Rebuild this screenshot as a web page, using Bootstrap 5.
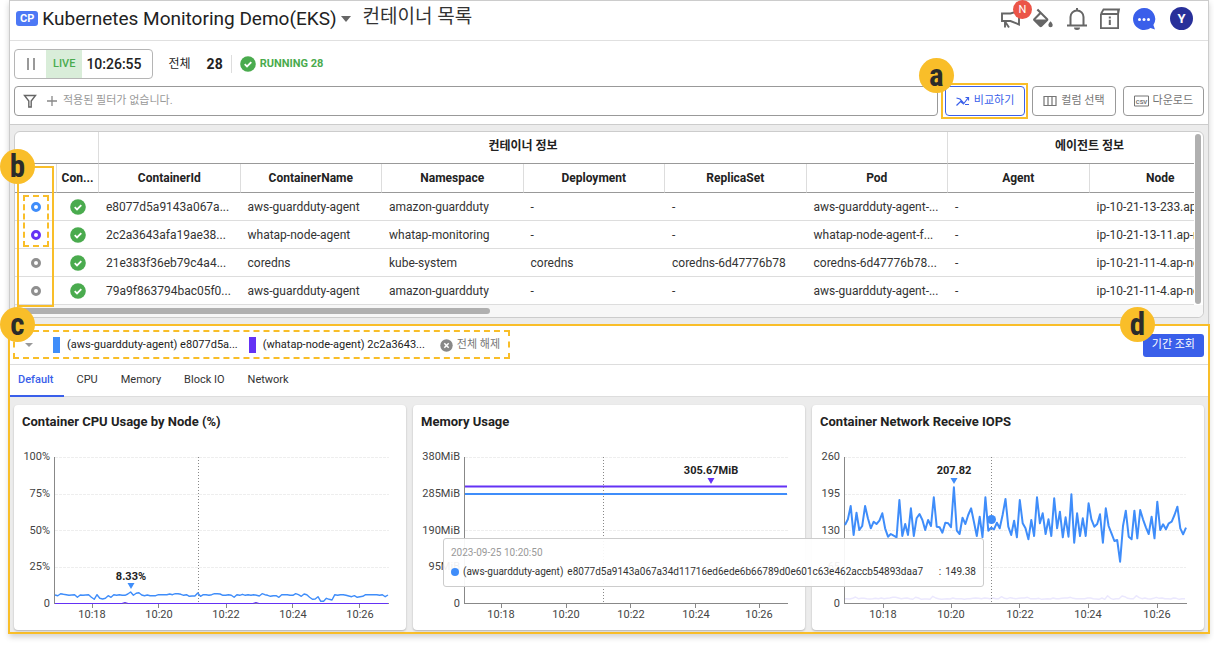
<!DOCTYPE html>
<html lang="ko">
<head>
<meta charset="utf-8">
<meta name="viewport" content="width=device-width, initial-scale=1">
<title>Kubernetes Monitoring Demo(EKS) - 컨테이너 목록</title>
<link href="https://cdn.jsdelivr.net/npm/bootstrap@5.3.0/dist/css/bootstrap.min.css" rel="stylesheet">
<style>
:root{--ink:#333;--muted:#757575;--line:#ddd;--brand:#3a5fea;--mark:#f9be29;--s1:#3f8dfa;--s2:#6432f5;--ok:#4aab4e}
body{font-family:Roboto,"Noto Sans CJK KR",sans-serif;font-size:12px;line-height:16px;color:#222;background:#fff;padding:0 5px 11px 9px}
.app{border:1px solid #ccc;border-bottom:0;box-shadow:0 3px 6px rgba(0,0,0,.18)}
.topbar{height:40px;border-bottom:1px solid #e0e0e0;padding:0 15px 4px 6px}
.cp{background:#4c78f5;color:#fff;font-size:11px;font-weight:700;line-height:15px;padding:0 4px;border-radius:3px}
.project,.pagename{font-size:19px;line-height:24px;color:var(--ink)}
.pagename{margin:0 0 4px 12px;font-weight:400}
.plain{background:none;border:0;padding:0;color:inherit}
.caret{width:0;height:0;border:5px solid transparent;border-top:6px solid #666;border-bottom:0}
.caret.sm{border-width:4px 4px 0;border-top-color:#999}
.icons{gap:10px}
.icons svg,.btn svg,.field svg{display:block}
.news{position:relative}
.newbadge{position:absolute;left:13px;top:-9px;width:19px;height:19px;border-radius:50%;background:#eb5548;color:#fff;font-size:11px;line-height:19px;text-align:center}
.avatar{width:23px;height:23px;border-radius:50%;background:#28309a;color:#fff;font-weight:700;font-size:13px;line-height:23px}
.tools{padding:8px 4px;border-bottom:1px solid #ccc}
.box30{height:30px;border:1px solid #999;border-radius:4px;background:#fff}
.live{border-color:#b5b5b5;overflow:hidden}
.live .tag{background:#d9edd9;color:var(--ok);padding:0 7px;line-height:28px;font-size:11px;font-weight:500}
.live time{font-size:14px;font-weight:500;padding:0 10px 0 4px;line-height:28px}
.pause{width:31px}
.pause i{width:2px;height:12px;background:#999}
.total{font-size:14px;font-weight:700}
.running{color:var(--ok);font-size:11px;font-weight:700}
.vr1{width:1px;height:18px;background:var(--line)}
.filters{gap:7px;margin-top:7px}
.field{padding:0 8px;gap:5px}
.field input{border:0;outline:0;background:none;font-size:11px;color:#333;min-width:0}
.field input::placeholder{color:#999;opacity:1}
.tool{font-size:11px;line-height:16px;padding:0 10px;color:#757575;gap:4px}
.tool.on{color:var(--brand);border-color:var(--brand)}
.hold{position:relative}
.pin{position:absolute;width:35px;height:35px;border-radius:50%;background:var(--mark);color:#2b2b2b;font:700 31px/35px "Roboto Condensed","Liberation Sans Narrow",Roboto,sans-serif;text-align:center;z-index:5}
.frame{position:absolute;border:2px solid var(--mark);pointer-events:none;z-index:4}
.frame.dash{border-style:dashed}
.stage{background:#ececec;padding:6px 4px}
.gridcard{background:#fff;border:1px solid #ccc;border-radius:6px}
.view{overflow:hidden;min-width:0;border-top-left-radius:6px}
.list{width:1216px;table-layout:fixed;border-collapse:separate;border-spacing:0;margin:0}
.list th,.list td{padding:0 0 0 7px;white-space:nowrap;overflow:hidden;vertical-align:middle;border:0;color:var(--ink)}
.list th{text-align:center;font-weight:700;border-bottom:1px solid #999;border-right:1px solid var(--line);color:#222;padding:0}
.list th:last-child{border-right:0}
.list tr.g th{height:32px;padding-bottom:4px}
.list tr.c th{height:29px}
.list td{height:28px;border-bottom:1px solid var(--line)}
.list td:first-child,.list td:nth-child(2){text-align:center;padding:0}
.list svg{display:block;margin:auto}
.pick{appearance:none;display:block;width:10px;height:10px;border:3px solid #8f8f8f;border-radius:50%;margin:0 auto;background:#fff}
.pick.p1{border-color:var(--s1)}.pick.p2{border-color:var(--s2)}
.vbar{width:9px;padding:2px 2px 1px 1px}
.hbar{height:12px;background:#f7f7f7;padding:3px 0;border-radius:0 0 6px 6px}
.thumb{background:#b0b0b0;border-radius:3px}
.hbar .thumb{width:40%;height:6px}
.panel{border:2px solid var(--mark);margin:0 -2px;background:#fff}
.legend{height:39px;border-bottom:1px solid var(--line);padding:0 4px 0 15px;font-size:11px}
.swatch{width:7px;height:16px}
.item{padding:0 11px 0 7px}
.clear{color:#777}
.query{background:var(--brand);color:#fff;font-size:11px;line-height:16px;height:23px;padding:0 8px;border-radius:3px}
.tabs{height:32px;border-bottom:1px solid var(--line);font-size:11px}
.tabs a{color:var(--ink);text-decoration:none;line-height:30px;padding:0 12px 0 11px;height:32px;border-bottom:2px solid transparent}
.tabs a.on{color:var(--brand);border-color:var(--brand);font-weight:500;padding:0 11px 0 8px;margin-right:1px}
.charts{display:grid;grid-template-columns:repeat(3,minmax(0,1fr));gap:7px;background:#ececec;padding:8px 4px 2px}
.chart{background:#fff;border-radius:4px;box-shadow:0 1px 2px rgba(0,0,0,.25)}
.chart h2{font-size:13px;line-height:16px;font-weight:700;margin:0;padding:9px 8px 10px;color:#222}
.chart svg{display:block;width:100%}
.chart text{font-size:11px;fill:#444}
.chart text.peak{font-weight:700;fill:#222;text-anchor:middle}
.x text{text-anchor:middle}.y text{text-anchor:end}
.grid{stroke:#eee;stroke-dasharray:3 1}
.axis{stroke:#888;fill:none}
.cursor{stroke:#888;stroke-dasharray:1 2}
.plot{fill:none;stroke-linejoin:round}
.tip{position:absolute;left:433px;top:141px;width:541px;height:49px;padding:6px 7px;border:1px solid #ccc;border-radius:3px;background:rgba(255,255,255,.92);font-size:10px;white-space:nowrap;z-index:3;color:var(--ink)}
.tip .when{line-height:16px;color:#999}
.tip .row2{gap:4px;line-height:22px}
.dot{width:8px;height:8px;border-radius:50%;background:var(--s1)}
</style>
</head>
<body>
<svg width="0" height="0" class="position-absolute" aria-hidden="true">
  <symbol id="ok" viewBox="0 0 16 16"><circle cx="8" cy="8" r="7.8" fill="#4aab4e"/><path d="M4.7 8.2 7 10.4l4.3-4.3" fill="none" stroke="#fff" stroke-width="1.8"/></symbol>
</svg>
<div class="app">
  <header class="topbar d-flex align-items-center justify-content-between">
    <div class="d-flex align-items-center">
      <span class="cp me-1">CP</span>
      <button class="plain project d-flex align-items-center" type="button">Kubernetes Monitoring Demo(EKS)<span class="caret ms-1"></span></button>
      <h1 class="pagename">컨테이너 목록</h1>
    </div>
    <div class="icons d-flex align-items-center">
      <button class="plain news" type="button" aria-label="News"><svg width="22" height="20" viewBox="0 0 22 20" fill="none" stroke="#666" stroke-width="1.9"><path d="M2 4.5h8.5L19 2v13.500L10.500 12H2zM5 12v6.500M5 12.500 9 18.500"/></svg><span class="newbadge">N</span></button>
      <button class="plain" type="button" aria-label="Theme"><svg width="24" height="24" viewBox="2 -1.500 22 22" fill="#666"><path d="M16.560 8.940 7.620 0 6.210 1.410l2.380 2.380-5.150 5.150c-.59.59-.59 1.540 0 2.120l5.500 5.500c.29.290.68.440 1.060.440s.77-.15 1.060-.44l5.500-5.500c.59-.58.59-1.530 0-2.120zM5.210 10 10 5.210 14.790 10zM19 11.500s-2 2.170-2 3.500a2 2 0 0 0 4 0c0-1.330-2-3.500-2-3.500z"/></svg></button>
      <button class="plain" type="button" aria-label="Alerts"><svg width="22" height="24" viewBox="0 0 22 24" fill="none" stroke="#666" stroke-width="2"><path d="M1 18.500h20M4.500 18V10a6.500 6.500 0 0 1 13 0v8M11 3.500V1"/><path d="M8 20.500h6a3 2.500 0 0 1-6 0z" fill="#666" stroke="none"/></svg></button>
      <button class="plain" type="button" aria-label="Guide"><svg width="24" height="24" viewBox="0 0 24 24" fill="none" stroke="#666" stroke-width="1.800"><path d="M2.900 7V21.100H20.100V7M2.900 7h17.200L21 2.500H5.500L2.900 7M20.100 7v-4"/><path d="M11.800 9.500v2M11.800 12.700v5.300" stroke-width="2"/></svg></button>
      <button class="plain" type="button" aria-label="Chat"><svg width="24" height="24" viewBox="0 0 24 24"><path d="M12 1a11 11 0 1 0 6.500 19.900l4.500 1.700-1.600-4.600A11 11 0 0 0 12 1z" fill="#3a5fea"/><g fill="#fff"><circle cx="7.500" cy="12.500" r="1.500"/><circle cx="12" cy="12.500" r="1.500"/><circle cx="16.500" cy="12.500" r="1.500"/></g></svg></button>
      <button class="plain avatar ms-1" type="button">Y</button>
    </div>
  </header>

  <section class="tools">
    <div class="d-flex align-items-center">
      <div class="box30 live d-flex align-items-center">
        <button class="plain pause d-flex justify-content-center gap-1" type="button" aria-label="Pause"><i></i><i></i></button>
        <span class="tag">LIVE</span><time>10:26:55</time>
      </div>
      <span class="ms-3">전체</span><span class="total ms-3">28</span>
      <span class="vr1 mx-2"></span>
      <svg class="me-1" width="16" height="16"><use href="#ok"/></svg><span class="running">RUNNING 28</span>
    </div>
    <div class="filters d-flex">
      <div class="field box30 d-flex align-items-center flex-grow-1">
        <svg class="me-1" width="14" height="14" viewBox="0 0 14 14" fill="none" stroke="#666" stroke-width="1.400"><path d="M1.500 1.500h11L8.200 7v6H5.800V7z"/></svg>
        <svg width="12" height="12" viewBox="0 0 12 12" stroke="#888" stroke-width="1.300"><path d="M6 1v10M1 6h10"/></svg>
        <input class="flex-grow-1 p-0" type="text" aria-label="필터" placeholder="적용된 필터가 없습니다.">
      </div>
      <div class="hold">
        <button class="btn tool on box30 d-flex align-items-center" type="button"><svg width="14" height="12" viewBox="0 0 14 12" fill="none" stroke="currentColor" stroke-width="1.200"><path d="M.5 10.500 4.500 6.500l3 2.500 4.500-6M9.500 2.500h3v3M.5 3l3.500 1 3.500 4M9 9.500h4"/></svg>비교하기</button>
        <span class="frame" style="inset:-3px -3px -3px -4px"></span><span class="pin" style="left:-26px;top:-28px">a</span>
      </div>
      <button class="btn tool box30 d-flex align-items-center" type="button"><svg width="14" height="12" viewBox="0 0 14 12" fill="none" stroke="currentColor" stroke-width="1.200"><path d="M1 1.500h12v9H1zM5 1.500v9M9 1.500v9"/></svg>컬럼 선택</button>
      <button class="btn tool box30 d-flex align-items-center" type="button"><svg width="15" height="12" viewBox="0 0 15 12"><path d="M.5 1h14v10H.5z" fill="none" stroke="currentColor"/><text x="7.500" y="8.500" text-anchor="middle" font-size="6" font-weight="700" fill="currentColor">CSV</text></svg>다운로드</button>
    </div>
  </section>

  <section class="stage">
    <div class="gridcard hold">
      <div class="d-flex">
        <div class="view flex-grow-1">
          <table class="list">
            <colgroup><col style="width:42px"><col style="width:42px"><col><col><col><col><col><col><col><col></colgroup>
            <thead>
              <tr class="g"><th colspan="2"></th><th colspan="6">컨테이너 정보</th><th colspan="2">에이전트 정보</th></tr>
              <tr class="c"><th></th><th>Con...</th><th>ContainerId</th><th>ContainerName</th><th>Namespace</th><th>Deployment</th><th>ReplicaSet</th><th>Pod</th><th>Agent</th><th>Node</th></tr>
            </thead>
            <tbody>
              <tr><td><input class="pick p1" type="checkbox" checked aria-label="e8077d5a9143"></td><td><svg width="16" height="16"><use href="#ok"/></svg></td><td>e8077d5a9143a067a...</td><td>aws-guardduty-agent</td><td>amazon-guardduty</td><td>-</td><td>-</td><td>aws-guardduty-agent-...</td><td>-</td><td>ip-10-21-13-233.ap-n...</td></tr>
              <tr><td><input class="pick p2" type="checkbox" checked aria-label="2c2a3643afa1"></td><td><svg width="16" height="16"><use href="#ok"/></svg></td><td>2c2a3643afa19ae38...</td><td>whatap-node-agent</td><td>whatap-monitoring</td><td>-</td><td>-</td><td>whatap-node-agent-f...</td><td>-</td><td>ip-10-21-13-11.ap-no...</td></tr>
              <tr><td><input class="pick" type="checkbox" aria-label="21e383f36eb7"></td><td><svg width="16" height="16"><use href="#ok"/></svg></td><td>21e383f36eb79c4a4...</td><td>coredns</td><td>kube-system</td><td>coredns</td><td>coredns-6d47776b78</td><td>coredns-6d47776b78...</td><td>-</td><td>ip-10-21-11-4.ap-nor...</td></tr>
              <tr><td><input class="pick" type="checkbox" aria-label="79a9f863794b"></td><td><svg width="16" height="16"><use href="#ok"/></svg></td><td>79a9f863794bac05f0...</td><td>aws-guardduty-agent</td><td>amazon-guardduty</td><td>-</td><td>-</td><td>aws-guardduty-agent-...</td><td>-</td><td>ip-10-21-11-4.ap-nor...</td></tr>
            </tbody>
          </table>
        </div>
        <div class="vbar d-flex"><div class="thumb flex-grow-1"></div></div>
      </div>
      <div class="hbar"><div class="thumb"></div></div>
      <span class="frame" style="left:2px;top:34px;width:37px;height:141px"></span>
      <span class="frame dash" style="left:8px;top:63px;width:26px;height:52px"></span>
      <span class="pin" style="left:-15px;top:17px">b</span>
    </div>
  </section>

  <section class="panel hold">
    <span class="frame dash" style="left:3px;top:4px;width:497px;height:29px"></span>
    <span class="pin" style="left:-10px;top:-19px">c</span>
    <span class="pin" style="right:53px;top:-19px">d</span>
    <div class="legend d-flex align-items-center">
      <button class="plain me-1" type="button" aria-label="접기"><span class="caret sm d-block"></span></button>
      <span class="swatch ms-3" style="background:var(--s1)"></span><span class="item">(aws-guardduty-agent) e8077d5a...</span>
      <span class="swatch" style="background:var(--s2)"></span><span class="item">(whatap-node-agent) 2c2a3643...</span>
      <button class="plain clear d-flex align-items-center gap-1 ms-1" type="button"><svg width="13" height="13" viewBox="0 0 13 13"><circle cx="6.500" cy="6.500" r="6.200" fill="#888"/><path d="m4.300 4.300 4.400 4.400m0-4.400L4.300 8.700" stroke="#fff" stroke-width="1.500"/></svg>전체 해제</button>
      <button class="btn query ms-auto" type="button">기간 조회</button>
    </div>
    <nav class="tabs d-flex"><a class="on" href="#">Default</a><a href="#">CPU</a><a href="#">Memory</a><a href="#">Block IO</a><a href="#">Network</a></nav>
    <div class="charts hold">
      <article class="chart"><h2>Container CPU Usage by Node (%)</h2>
        <svg viewBox="0 0 392 190">
          <path class="grid" d="M41 17.500H375M41 54.500H375M41 90.500H375M41 127.500H375"/>
          <path class="axis" d="M40.500 17V164M40 163.500H375M78.500 164v4M144.500 164v4M212.500 164v4M278.500 164v4M345.500 164v4"/>
          <path class="cursor" d="M184.500 17V164"/>
          <polyline class="plot" data-series="cpu" data-from="41" data-to="374" stroke="#3f8dfa" stroke-width="1.400"/>
          <path class="plot" d="M41 163.500H108l3-1 3 1H239l3-1 3 1H374" stroke="#6432f5" stroke-width="1.200"/>
          <path d="M113.500 143h7l-3.500 6z" fill="#3f8dfa"/><text class="peak" x="117" y="140">8.33%</text>
          <g class="y"><text x="36" y="20">100%</text><text x="36" y="57">75%</text><text x="36" y="94">50%</text><text x="36" y="130">25%</text><text x="36" y="167">0</text></g>
          <g class="x"><text x="78" y="178">10:18</text><text x="145" y="178">10:20</text><text x="212" y="178">10:22</text><text x="279" y="178">10:24</text><text x="346" y="178">10:26</text></g>
        </svg></article>
      <article class="chart"><h2>Memory Usage</h2>
        <svg viewBox="0 0 392 190">
          <path class="grid" d="M52 17.500H375M52 54.500H375M52 90.500H375M52 127.500H375"/>
          <path class="axis" d="M51.500 17V164M51 163.500H375M88.500 164v4M153.500 164v4M217.500 164v4M282.500 164v4M346.500 164v4"/>
          <path class="plot" d="M52 46.500H374" stroke="#6432f5" stroke-width="1.800"/><path class="plot" d="M52 54H374" stroke="#3f8dfa" stroke-width="1.800"/>
          <path class="cursor" d="M190.500 17V164"/>
          <path d="M294.500 38h7l-3.500 6z" fill="#6432f5"/><text class="peak" x="298" y="34">305.67MiB</text>
          <g class="y"><text x="47" y="20">380MiB</text><text x="47" y="57">285MiB</text><text x="47" y="94">190MiB</text><text x="47" y="130">95MiB</text><text x="47" y="167">0</text></g>
          <g class="x"><text x="88" y="178">10:18</text><text x="153" y="178">10:20</text><text x="218" y="178">10:22</text><text x="283" y="178">10:24</text><text x="346" y="178">10:26</text></g>
        </svg></article>
      <article class="chart"><h2>Container Network Receive IOPS</h2>
        <svg viewBox="0 0 392 190">
          <path class="grid" d="M32 17.500H374M32 54.500H374M32 90.500H374M32 127.500H374"/>
          <polyline class="plot" data-series="idle" data-from="32" data-to="373" stroke="#ebe8fe" stroke-width="1.400"/>
          <path class="axis" d="M32.500 17V164M32 163.500H375M71.500 164v4M139.500 164v4M207.500 164v4M276.500 164v4M345.500 164v4"/>
          <path class="cursor" d="M179.500 17V164"/>
          <polyline class="plot" data-series="net" data-from="33" data-to="374" stroke="#3f8dfa" stroke-width="2"/>
          <circle cx="179.500" cy="79.500" r="4.500" fill="#3f8dfa"/>
          <path d="M138.500 38h7l-3.500 6z" fill="#3f8dfa"/><text class="peak" x="142" y="34">207.82</text>
          <g class="y"><text x="28" y="20">260</text><text x="28" y="57">195</text><text x="28" y="94">130</text><text x="28" y="130">65</text><text x="28" y="167">0</text></g>
          <g class="x"><text x="71" y="178">10:18</text><text x="139" y="178">10:20</text><text x="208" y="178">10:22</text><text x="276" y="178">10:24</text><text x="345" y="178">10:26</text></g>
        </svg></article>
      <div class="tip"><div class="when">2023-09-25 10:20:50</div><div class="row2 d-flex align-items-center"><span class="dot"></span><span>(aws-guardduty-agent)</span><span>e8077d5a9143a067a34d11716ed6ede6b66789d0e601c63e462accb54893daa7</span><span class="ms-auto">:</span><span>149.38</span></div></div>
    </div>
  </section>
</div>
<script src="https://cdn.jsdelivr.net/npm/bootstrap@5.3.0/dist/js/bootstrap.bundle.min.js"></script>
<script>
// Samples are heights above the time axis, three units to a plot pixel.
const series = {
  cpu: [27,25,31,29,28,26,27,28,20,27,26,27,28,20,14,28,17,15,17,25,20,28,26,28,26,26,30,36,26,32,34,27,25,27,25,25,25,28,28,28,28,30,28,31,31,29,26,28,23,24,24,33,23,28,28,26,28,31,31,30,26,26,28,26,20,28,26,29,26,28,26,28,26,24,31,28,26,23,25,25,20,28,28,28,26,26,31,28,23,30,28,20,14,15,22,8,8,17,14,12,28,26,28,28,26,24,22,25,20,22,23,28,28,28,28,28,26,28,22,27],
  idle: [16,16,15,17,21,16,17,17,16,15,16,17,16,18,16,17,18,20,20,18,16,17,18,16,14,20,18,14,15,15,14,23,18,16,14,15,16,15,18,16,16,16,14,16,16,17,18,17,16,18,17,16,18,16,16,22,17,16,19,17,16,17,18,18,20,16,16,16,17,14,15,16,15,18,16,16,17,18,18,20,17,16,16,16,16,18,18,16,15,14,18,14,25,17,14,16,16,24,22,17,16,16,25,19,16,18,16,15,17,20,17,18,16,16,15,18,17,14,16,16],
  net: [237,254,294,207,274,222,234,294,257,227,247,240,250,272,227,202,210,205,200,312,204,240,207,287,204,257,270,252,222,252,234,320,232,230,214,244,242,230,350,220,210,259,240,267,287,247,204,262,200,320,220,229,224,244,227,267,315,232,207,250,200,312,242,227,194,252,204,320,242,272,210,254,204,317,227,277,200,260,202,329,184,272,204,257,204,302,254,232,240,269,184,287,234,212,189,192,127,234,280,202,194,280,197,282,254,230,210,262,197,307,222,239,224,242,247,267,292,227,209,229]
};
document.querySelectorAll('[data-series]').forEach(el => {
  const v = series[el.dataset.series], from = +el.dataset.from, to = +el.dataset.to;
  el.setAttribute('points', v.map((n, i) => (from + (to - from) * i / (v.length - 1)).toFixed(1) + ',' + (164 - n / 3).toFixed(1)).join(' '));
});
</script>
</body>
</html>
